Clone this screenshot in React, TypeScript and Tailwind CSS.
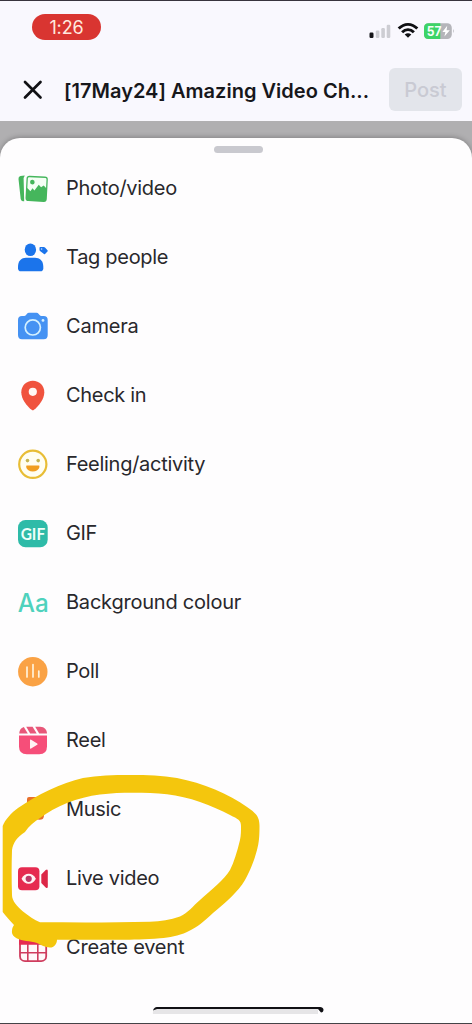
import type { ReactNode } from "react";

type Option = {
  label: string;
  tracking: string;
  icon: ReactNode;
};

const options: Option[] = [
  {
    label: "Photo/video",
    tracking: "tracking-[-0.3px]",
    icon: (
      <>
        <path d="M2.4 3 6.8 2.5 5.6 5 6.2 28.3 4.8 28.2Q3 28 2.7 26L.5 6Q.3 3.4 2.4 3Z" fill="#45b65c" />
        <g transform="rotate(3 18 16)">
          <rect x="8" y="3" width="21.3" height="25.5" rx="3" fill="#45b65c" />
          <path d="M10.8 4.5H27Q28 4.5 28 6V14.5L25.5 12 23 14 20.5 11.5 16.5 17.5 14.5 15.5 12.5 18.5 9.3 15.5V6Q9.3 4.5 10.8 4.5Z" fill="#f5fff5" />
          <circle cx="14" cy="9.3" r="2.3" fill="#45b65c" />
        </g>
      </>
    ),
  },
  {
    label: "Tag people",
    tracking: "tracking-[-0.3px]",
    icon: (
      <g fill="#1b74eb">
        <ellipse cx="12.4" cy="7.8" rx="5.7" ry="6.3" />
        <path d="M0 25C0 18.5 3.6 15.7 8 15.7H17C21.7 15.7 25.3 18.5 25.3 25V26.2Q25.3 29.3 22.3 29.3H3Q0 29.3 0 26.2Z" />
        <path d="M22.3 5H25.8Q26.5 5 27 5.5L29.5 8.2Q30 8.8 29.5 9.4L27 12Q26.5 12.4 26 12L22 9Q21.5 8.6 21.5 8V5.8Q21.5 5 22.3 5Z" />
        <circle cx="23.6" cy="7" r="0.8" fill="#cfe2ff" />
      </g>
    ),
  },
  {
    label: "Camera",
    tracking: "tracking-[-0.2px]",
    icon: (
      <>
        <path d="M4 5H6.2Q7.3 5 8 4L8.8 2.9Q9.7 1.8 11 1.8H18.5Q19.8 1.8 20.7 2.9L21.6 4Q22.3 5 23.4 5H25.7Q29.7 5 29.7 9V24Q29.7 28.2 25.7 28.2H4Q0 28.2 0 24V9Q0 5 4 5Z" fill="#4592f3" />
        <circle cx="14.8" cy="16.4" r="7.6" fill="none" stroke="#d3f0ff" strokeWidth="1.7" />
        <circle cx="25" cy="9.4" r="1.4" fill="#d3f0ff" />
      </>
    ),
  },
  {
    label: "Check in",
    tracking: "tracking-[-0.3px]",
    icon: (
      <>
        <path d="M14.8.8C21.5.8 26.3 5.8 26.3 12.2 26.3 19 21 25.5 16 29.8Q14.8 30.8 13.6 29.8C8.5 25.5 3.3 19 3.3 12.2 3.3 5.8 8.2.8 14.8.8Z" fill="#f0533e" />
        <circle cx="14.8" cy="11.8" r="4.1" fill="#fff8f4" />
      </>
    ),
  },
  {
    label: "Feeling/activity",
    tracking: "tracking-[-0.28px]",
    icon: (
      <>
        <circle cx="14.8" cy="15.3" r="13.6" fill="#fffef2" stroke="#e8bd36" strokeWidth="2.2" />
        <circle cx="9.5" cy="11.6" r="1.8" fill="#c5b553" />
        <circle cx="20.2" cy="11.6" r="1.8" fill="#c5b553" />
        <path d="M8.6 16.6H21C22 16.6 21.7 22.6 14.8 22.6 7.9 22.6 7.6 16.6 8.6 16.6Z" fill="#f19e21" />
      </>
    ),
  },
  {
    label: "GIF",
    tracking: "tracking-[-0.4px]",
    icon: (
      <>
        <rect y="2" width="29.7" height="27.2" rx="7.5" fill="#2ebba8" />
        <text x="14.9" y="21.6" textAnchor="middle" textLength="24.5" lengthAdjust="spacingAndGlyphs" fontFamily="Lato, sans-serif" fontSize="17" fontWeight="700" fill="#effffa">GIF</text>
      </>
    ),
  },
  {
    label: "Background colour",
    tracking: "tracking-[-0.22px]",
    icon: (
      <text x="-0.3" y="24.6" textLength="31" lengthAdjust="spacingAndGlyphs" fontFamily="Inter, sans-serif" fontSize="25" fontWeight="500" fill="#4fd2bd">Aa</text>
    ),
  },
  {
    label: "Poll",
    tracking: "tracking-[-0.3px]",
    icon: (
      <>
        <circle cx="14.8" cy="15.7" r="14.7" fill="#faa245" />
        <path d="M9 11V21M15 8.6V21M20.8 15V21" stroke="#fff1d9" strokeWidth="1.7" strokeLinecap="round" />
      </>
    ),
  },
  {
    label: "Reel",
    tracking: "tracking-[-0.3px]",
    icon: (
      <>
        <g fill="#e85779">
          <path d="M5.8 1.9 9.8 8.6H1.2Q1.5 3.2 5.8 1.9Z" />
          <path d="M8.2 1.8H14.6L18.7 8.6H12.2Z" />
          <path d="M17.2 1.8H22.2C26.5 2 28.8 4.5 29 8.6H21.2Z" />
        </g>
        <path d="M1 10.6H29V21.4Q29 29.2 21.2 29.2H8.8Q1 29.2 1 21.4Z" fill="#f64e79" />
        <path d="M12 15.4Q12 14.2 13.1 14.8L19.2 18.5Q20.2 19.2 19.2 19.8L13.1 23.6Q12 24.2 12 23Z" fill="#fff3f3" />
      </>
    ),
  },
  {
    label: "Music",
    tracking: "tracking-[-0.3px]",
    icon: (
      <g fill="#e8702b">
        <path d="M9 5Q9 2.9 11 2.9H24Q26 2.9 26 5V22H21V10H13V23H9Z" />
        <ellipse cx="21.5" cy="22.2" rx="4.3" ry="3.6" />
        <ellipse cx="9" cy="23.2" rx="3.8" ry="3" />
      </g>
    ),
  },
  {
    label: "Live video",
    tracking: "tracking-[-0.3px]",
    icon: (
      <>
        <rect y="4.3" width="21.4" height="23" rx="4" fill="#e62b50" />
        <path d="M23.3 11.5 27.7 7Q29.8 5.5 29.8 8V23.5Q29.8 26 27.7 24.5L23.3 20Z" fill="#dc2747" />
        <path d="M3.5 15.8Q6.2 10.7 10.7 10.7T17.9 15.8Q15.2 20.8 10.7 20.8T3.5 15.8Z" fill="#fff3f4" />
        <circle cx="10.7" cy="15.8" r="3.1" fill="#bb3a67" />
      </>
    ),
  },
  {
    label: "Create event",
    tracking: "tracking-[-0.2px]",
    icon: (
      <>
        <rect x="2" y="4" width="26.2" height="25.2" rx="5" fill="#fff8fa" stroke="#cf3c5e" strokeWidth="1.8" />
        <path d="M1.1 12.8V8Q1.1 3.1 6 3.1H24Q29 3.1 29 8V12.8Z" fill="#e62b50" />
        <path d="M9.8 12V29M19.8 12V29M2 20.7H28" stroke="#cf3c5e" strokeWidth="1.6" />
      </>
    ),
  },
];

function StatusIcons() {
  return (
    <svg width="88" height="20" viewBox="0 0 88 20" className="mt-[20px]">
      <rect x="1.5" y="11.5" width="4" height="5.5" rx="1.2" fill="#151519" />
      <g fill="#cdcdd3">
        <rect x="7.8" y="9.5" width="3.6" height="7.5" rx="1.2" />
        <rect x="13.3" y="7" width="3.6" height="10" rx="1.2" />
        <rect x="18.7" y="3.8" width="3.6" height="13.2" rx="1.2" />
      </g>
      <g fill="none" stroke="#101013" strokeWidth="2.9">
        <path d="M30.7 7.6C36.2 1.9 43.8 1.9 49.3 7.6" />
        <path d="M34.1 11.3C37.6 7.8 42.4 7.8 45.9 11.3" />
      </g>
      <path d="M36.7 13.6Q40 10.9 43.3 13.6L40 16.8Z" fill="#101013" />
      <rect x="56" y="2.3" width="27.8" height="15.7" rx="4.5" fill="#b5b5ba" />
      <path d="M60.5 2.3H72.3V18H60.5Q56 18 56 13.5V6.8Q56 2.3 60.5 2.3Z" fill="#3dd467" />
      <path d="M85 7.8Q86.7 10.1 85 12.3Z" fill="#b5b5ba" />
      <text x="58.8" y="14.7" textLength="14.8" lengthAdjust="spacingAndGlyphs" fontFamily="Inter, sans-serif" fontSize="12.6" fontWeight="700" fill="#f5fff7">57</text>
      <path d="M79.2 4.8 74.4 10.9H77.4L76.4 15.6 81.8 9.2H78.6Z" fill="#fff" />
    </svg>
  );
}

function Header() {
  return (
    <header className="h-[121px] border-t border-[#38343e] bg-[#f9f8fe]">
      <div className="flex h-[57px] items-start justify-between pl-8 pr-[16px]">
        <div className="mt-[13px] flex h-[26px] w-[69px] items-center justify-center rounded-full bg-[#d93531] text-[18px] tracking-[-0.1px] text-[#ffe9df]">
          1:26
        </div>
        <StatusIcons />
      </div>
      <div className="flex h-[63px] items-center pl-[23px] pr-[9px]">
        <svg width="20" height="20" viewBox="0 0 20 20" className="mt-px">
          <path d="M2 2 17.5 17.5M17.5 2 2 17.5" stroke="#111115" strokeWidth="2.7" strokeLinecap="round" />
        </svg>
        <h1 className="ml-[21px] mt-[2px] w-[325px] whitespace-nowrap text-[20px] font-semibold tracking-[0.02px] text-[#17171b]">
          [17May24] Amazing Video Ch...
        </h1>
        <button className="h-[43px] w-[73px] shrink-0 rounded-md bg-[#e3e5eb] text-[20px] font-medium text-[#c9cad3]">
          Post
        </button>
      </div>
    </header>
  );
}

// Hand-drawn ring around "Live video"
function Highlight() {
  return (
    <svg width="270" height="180" viewBox="0 770 270 180" className="pointer-events-none absolute left-0 top-[770px]">
      <path
        fillRule="evenodd"
        fill="#f4c60d"
        d="M2.7 826C5 820 11 813 18 808C37 795 61 783 83 778C98 775.5 113 775 130 775C148 775 162 775.5 177 778C203 783 229 794 247 807C256 813 259.500 817 259.500 826C259.500 836 259 843 257 850C254 861 251 869 245 880C238 892 226 902 213 913C204 921 198 927 187 932C178 936 170 937.500 160 938.300C145 939.700 133 939.700 120 939.700H57C57 944 54 947.500 50 947.500C45 947.500 41 945 37 943C30 941 22 941 17 938.500C13 936.500 11.500 934 12 931C12 928 13 926.500 14 925C10 921 6 916 2.700 912ZM16 840C18 837 21 835 25 832C29 826 34 822 40 818C48 812 57 807 67 803C78 798.500 89 796 100 794.500C111 793 122 792.700 133 792.700C145 792.700 156 793 167 794.300C178 796 189 798 200 802C211 806 221 810 230 815C238 819 241 820 241 826C241 831 241 835 240 840C237 852 234 862 230 870C224 880 211 890 200 900C193 906 188 913 180 916.500C170 920 161 921.500 150 921.700C114 922.700 77 922.500 40 922.300C34 920 29 916 23 911.500C17 906 12 901 12 895C11.500 880 11.500 865 12 850C12.500 846 14 843 16 840Z"
      />
    </svg>
  );
}

export default function App() {
  return (
    <main className="relative flex h-[1024px] w-[472px] flex-col overflow-hidden bg-[#b0afb1] font-['Inter',sans-serif]">
      <Header />
      <section className="mt-[17px] flex flex-1 flex-col rounded-t-[20px] border-b border-[#444347] bg-[#fefdfe] shadow-[0_-1px_5px_rgba(0,0,0,0.25)]">
        <div className="ml-[214px] mt-[8px] h-[7px] w-[49px] shrink-0 rounded-full bg-[#c9c9cf]" />
        <ul>
          {options.map((option) => (
            <li key={option.label} className="flex h-[69px] items-center pl-[18px]">
              <svg width="31" height="32" viewBox="0 -1 31 32" className="shrink-0">
                {option.icon}
              </svg>
              <span className={`ml-[17px] whitespace-nowrap text-[20px] leading-none text-[#29282c] ${option.tracking}`}>
                {option.label}
              </span>
            </li>
          ))}
        </ul>
        <svg width="172" height="9" viewBox="0 0 172 9" className="ml-[152px] mt-auto mb-[8px] shrink-0">
          <path d="M1 8Q0 5 4 2.5H166V8Z" fill="#e6e5e7" />
          <path d="M1 4.5Q2 1 5 1H168Q171 1 171.5 3.5 171.5 6.5 169 6.5L166 3H5Z" fill="#111115" />
        </svg>
      </section>
      <Highlight />
    </main>
  );
}
